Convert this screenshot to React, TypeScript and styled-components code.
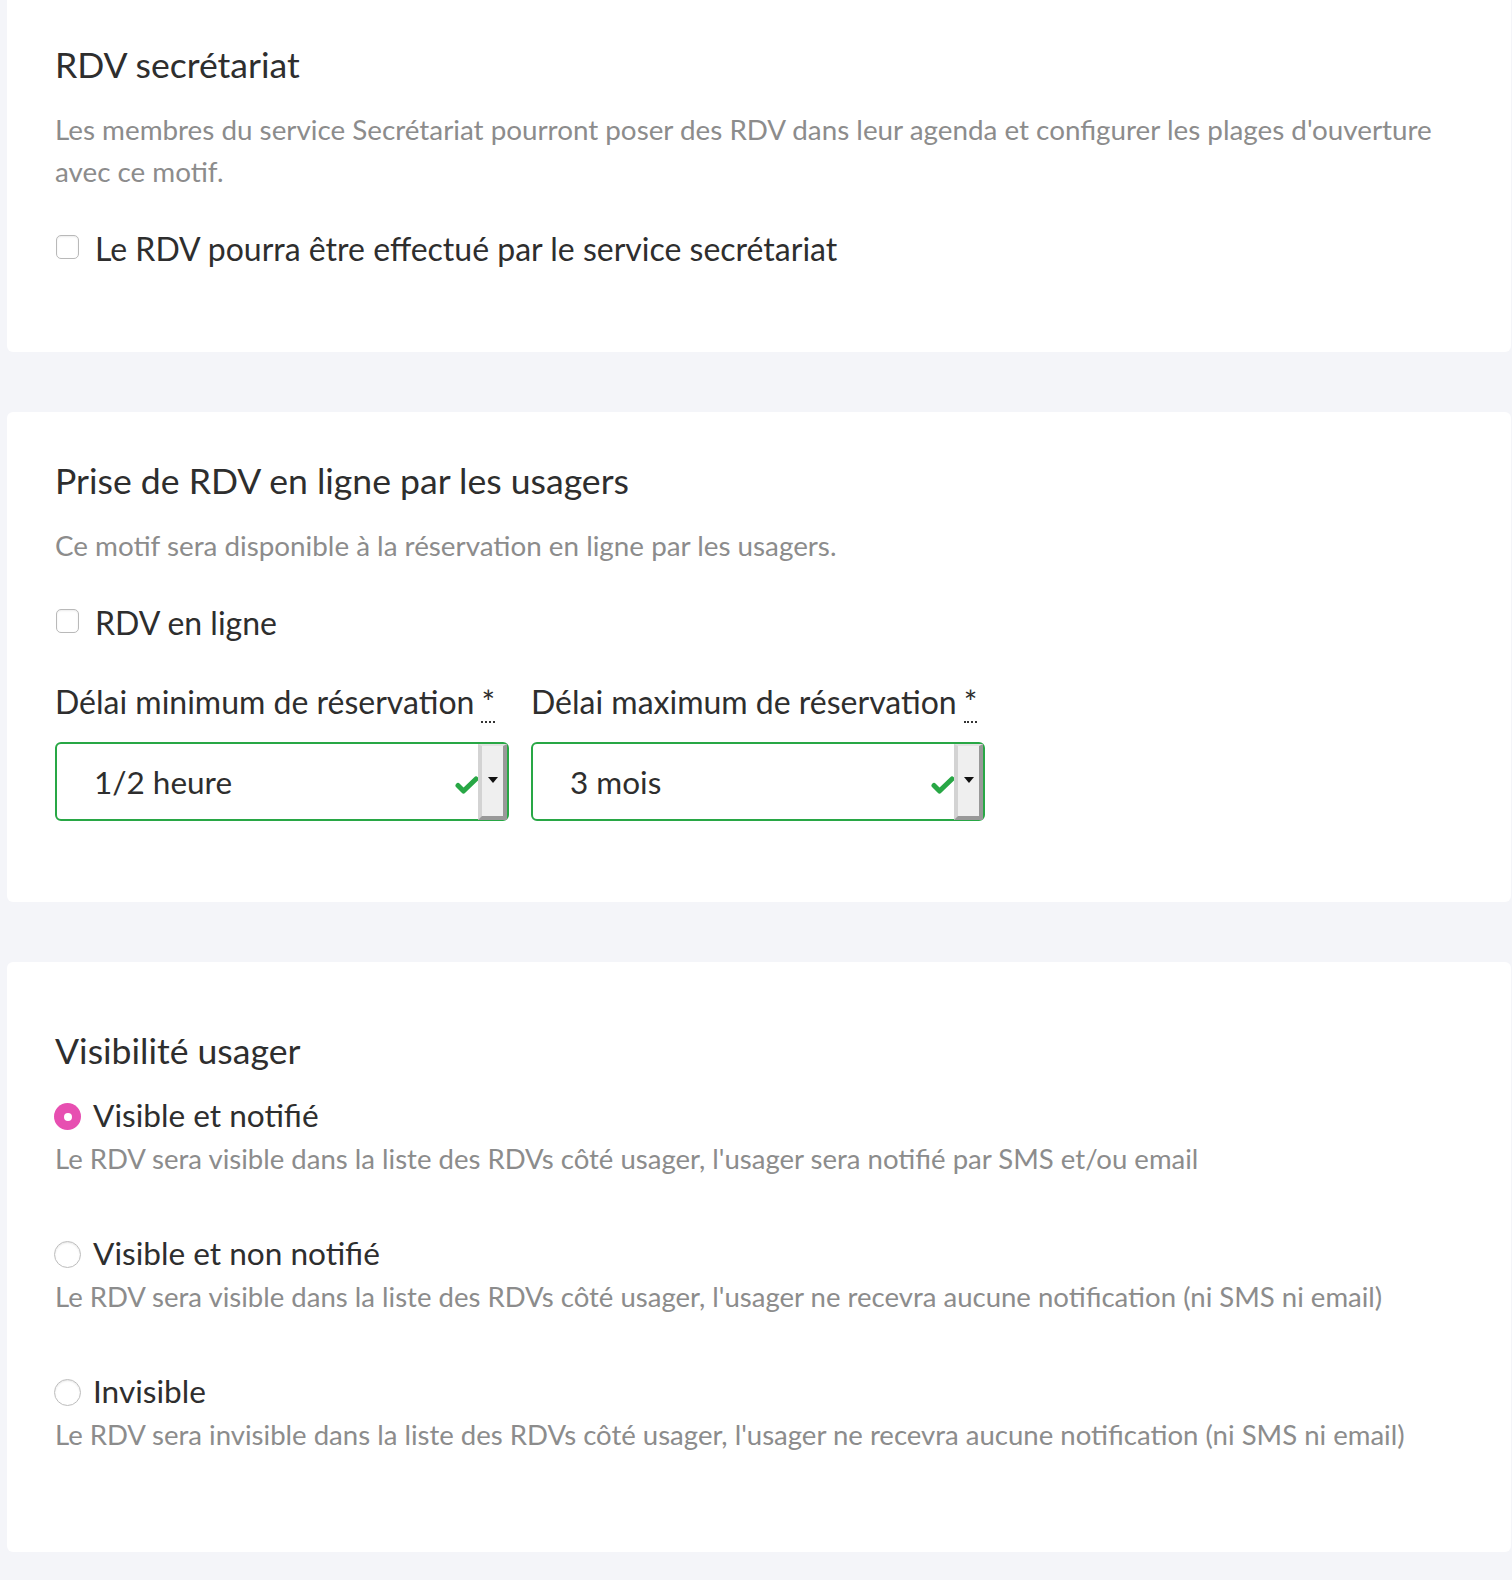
import React from "react";
import styled, { createGlobalStyle } from "styled-components";

const GlobalStyle = createGlobalStyle`
  html, body { margin: 0; padding: 0; }
  body {
    background: #f4f5f9;
    font-family: Lato, "Open Sans", "Liberation Sans", sans-serif;
    color: #2e2e2e;
  }
`;

const Page = styled.main`
  display: flex;
  flex-direction: column;
  gap: 60px;
  padding: 0 1px 0 7px;
  margin-top: -8px;
`;

const Card = styled.section<{ $top: number; $bottom: number }>`
  background: #ffffff;
  border-radius: 6px;
  padding: ${(p) => p.$top}px 48px ${(p) => p.$bottom}px 48px;
`;

const Title = styled.h2`
  margin: 0;
  font-size: 35.6px;
  font-weight: 400;
  line-height: 40px;
  color: #2e2e2e;
`;

const Description = styled.p`
  margin: 24px 0 0 0;
  font-size: 27.8px;
  line-height: 42px;
  color: #8c8c8c;
`;

const CheckRow = styled.label`
  display: flex;
  align-items: center;
  gap: 16px;
  margin-top: 33px;
  font-size: 32px;
  line-height: 45px;
  color: #2e2e2e;
`;

const CheckBox = styled.span`
  width: 23px;
  height: 24px;
  box-sizing: border-box;
  border: 1px solid #b9b9b9;
  border-radius: 5px;
  background: #fff;
  box-shadow: inset 0 1px 2px rgba(0, 0, 0, 0.08);
  flex: none;
  margin-top: -4px;
  margin-left: 1px;
`;

const FieldRow = styled.div`
  display: flex;
  gap: 22px;
  margin-top: 34px;
`;

const Field = styled.div`
  width: 454px;
  display: flex;
  flex-direction: column;
  gap: 18px;
`;

const FieldLabel = styled.div`
  font-size: 32px;
  line-height: 45px;
  color: #2e2e2e;
  white-space: nowrap;
`;

const Required = styled.abbr`
  text-decoration: none;
  border-bottom: 2px dotted #333;
  margin-left: 7px;
`;

const SelectBox = styled.div`
  height: 79px;
  box-sizing: border-box;
  border: 2px solid #28a745;
  border-radius: 6px;
  display: flex;
  align-items: center;
  padding-left: 37px;
  font-size: 31.5px;
  color: #2e2e2e;
`;

const SelectValue = styled.span`
  flex: 1;
`;

const ValidIcon = styled.svg`
  width: 23px;
  height: 18px;
  margin-top: 6px;
  flex: none;
`;

const Spinner = styled.span`
  align-self: stretch;
  width: 29px;
  margin: 0 0 -1px 0;
  box-sizing: border-box;
  background: #efefef;
  border-left: 4px solid #d3d3d3;
  border-top: 2px solid #e2e2e2;
  border-right: 4px solid #999999;
  border-bottom: 4px solid #999999;
  display: flex;
  align-items: center;
  justify-content: center;
`;

const Triangle = styled.span`
  width: 0;
  height: 0;
  border-left: 5px solid transparent;
  border-right: 5px solid transparent;
  border-top: 6px solid #111;
  margin-top: -2px;
`;

const RadioGroup = styled.div`
  display: flex;
  flex-direction: column;
  gap: 51px;
  margin-top: 22px;
`;

const RadioOption = styled.div``;

const RadioRow = styled.label`
  display: flex;
  align-items: center;
  gap: 12px;
  font-size: 31.6px;
  line-height: 45px;
  color: #2e2e2e;
`;

const RadioDot = styled.span<{ $checked?: boolean }>`
  width: 27px;
  height: 27px;
  box-sizing: border-box;
  border-radius: 50%;
  flex: none;
  margin-left: -1px;
  margin-top: 2px;
  background: ${(p) => (p.$checked ? "#e74fb1" : "#ffffff")};
  border: ${(p) => (p.$checked ? "none" : "1px solid #bdbdbd")};
  box-shadow: ${(p) => (p.$checked ? "none" : "inset 0 1px 2px rgba(0,0,0,0.1)")};
  display: flex;
  align-items: center;
  justify-content: center;
  &::after {
    content: "";
    display: ${(p) => (p.$checked ? "block" : "none")};
    width: 8px;
    height: 8px;
    border-radius: 50%;
    background: #fff;
  }
`;

const RadioHint = styled.div`
  font-size: 27.55px;
  line-height: 42px;
  color: #8c8c8c;
`;

function Select({ value }: { value: string }) {
  return (
    <SelectBox>
      <SelectValue>{value}</SelectValue>
      <ValidIcon viewBox="0 0 23 18">
        <polyline
          points="3,9.5 8.5,15 21,3"
          fill="none"
          stroke="#28a745"
          strokeWidth="5"
          strokeLinecap="round"
          strokeLinejoin="round"
        />
      </ValidIcon>
      <Spinner>
        <Triangle />
      </Spinner>
    </SelectBox>
  );
}

const visibility = [
  {
    label: "Visible et notifié",
    hint: "Le RDV sera visible dans la liste des RDVs côté usager, l'usager sera notifié par SMS et/ou email",
    checked: true,
  },
  {
    label: "Visible et non notifié",
    hint: "Le RDV sera visible dans la liste des RDVs côté usager, l'usager ne recevra aucune notification (ni SMS ni email)",
    checked: false,
  },
  {
    label: "Invisible",
    hint: "Le RDV sera invisible dans la liste des RDVs côté usager, l'usager ne recevra aucune notification (ni SMS ni email)",
    checked: false,
  },
];

export default function App() {
  return (
    <>
      <GlobalStyle />
      <Page>
        <Card $top={53} $bottom={81}>
          <Title>RDV secrétariat</Title>
          <Description>
            Les membres du service Secrétariat pourront poser des RDV dans leur agenda et configurer les plages d'ouverture
            avec ce motif.
          </Description>
          <CheckRow>
            <CheckBox />
            Le RDV pourra être effectué par le service secrétariat
          </CheckRow>
        </Card>

        <Card $top={49} $bottom={81}>
          <Title>Prise de RDV en ligne par les usagers</Title>
          <Description>Ce motif sera disponible à la réservation en ligne par les usagers.</Description>
          <CheckRow>
            <CheckBox />
            RDV en ligne
          </CheckRow>
          <FieldRow>
            <Field>
              <FieldLabel>
                Délai minimum de réservation<Required title="requis">*</Required>
              </FieldLabel>
              <Select value="1/2 heure" />
            </Field>
            <Field>
              <FieldLabel>
                Délai maximum de réservation<Required title="requis">*</Required>
              </FieldLabel>
              <Select value="3 mois" />
            </Field>
          </FieldRow>
        </Card>

        <Card $top={69} $bottom={96}>
          <Title>Visibilité usager</Title>
          <RadioGroup>
            {visibility.map((v) => (
              <RadioOption key={v.label}>
                <RadioRow>
                  <RadioDot $checked={v.checked} />
                  {v.label}
                </RadioRow>
                <RadioHint>{v.hint}</RadioHint>
              </RadioOption>
            ))}
          </RadioGroup>
        </Card>
      </Page>
    </>
  );
}
